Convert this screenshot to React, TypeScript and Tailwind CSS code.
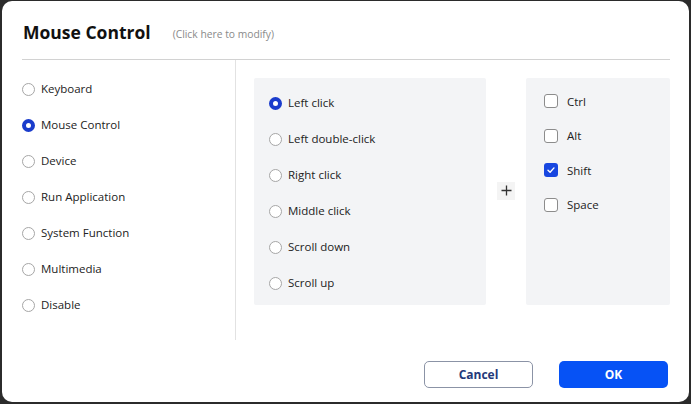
import React from 'react'

const FONT = { fontFamily: '"Open Sans", "Noto Sans", sans-serif' }

const CATEGORIES = ['Keyboard', 'Mouse Control', 'Device', 'Run Application', 'System Function', 'Multimedia', 'Disable']
const ACTIONS = ['Left click', 'Left double-click', 'Right click', 'Middle click', 'Scroll down', 'Scroll up']
const KEYS = [
  { label: 'Ctrl', checked: false },
  { label: 'Alt', checked: false },
  { label: 'Shift', checked: true },
  { label: 'Space', checked: false },
]

function Radio({ checked }: { checked: boolean }) {
  return checked ? (
    <span className="box-border block h-[13px] w-[13px] shrink-0 rounded-full border-[4px] border-[#1a3ccc] bg-white" />
  ) : (
    <span className="box-border block h-[13px] w-[13px] shrink-0 rounded-full border-[1.5px] border-[#a6a6a6] bg-white" />
  )
}

function Checkbox({ checked }: { checked: boolean }) {
  if (checked) {
    return (
      <span className="flex h-[14px] w-[14px] shrink-0 items-center justify-center rounded-[3px] bg-[#1746e0]">
        <svg width="10" height="10" viewBox="0 0 10 10" fill="none">
          <path d="M2 5.2 L4.1 7.2 L8 2.9" stroke="white" strokeWidth="1.4" strokeLinecap="round" strokeLinejoin="round" />
        </svg>
      </span>
    )
  }
  return <span className="box-border block h-[14px] w-[14px] shrink-0 rounded-[3px] border-[1.5px] border-[#8c8c8c] bg-white" />
}

export default function App() {
  return (
    <div className="h-[404px] w-[691px] bg-[#2b2b2b] pt-px pr-[2px] pb-[2px] pl-[2px]" style={FONT}>
      <div className="flex h-full flex-col rounded-[10px] bg-white pr-[19px] pl-[20px] text-[#222]">
        <div className="flex h-[59px] items-start border-b border-[#d2d2d2] pt-[20px]">
          <h1 className="pl-px text-[17.5px] leading-[23px] font-bold text-[#111]">Mouse Control</h1>
          <span className="ml-[22px] pt-[2px] text-[10.3px] leading-[23px] text-[#8a8a8a]">(Click here to modify)</span>
        </div>

        <div className="flex h-[280px]">
          <div className="w-[214px] border-r border-[#e2e2e2] pt-[11px]">
            {CATEGORIES.map((c, i) => (
              <div key={c} className="flex h-[36px] items-center gap-[6px] text-[11.5px]">
                <Radio checked={i === 1} />
                <span>{c}</span>
              </div>
            ))}
          </div>

          <div className="flex items-start pt-[18px] pl-[18px]">
            <div className="h-[227px] w-[232px] rounded-[2px] bg-[#f3f4f6] pt-[7px] pl-[15px]">
              {ACTIONS.map((a, i) => (
                <div key={a} className="flex h-[36px] items-center gap-[6px] text-[11.5px]">
                  <Radio checked={i === 0} />
                  <span>{a}</span>
                </div>
              ))}
            </div>

            <div className="flex h-[227px] w-[40px] items-center justify-center">
              <span className="mt-[-2px] flex h-[18px] w-[18px] items-center justify-center bg-[#f4f4f4]">
                <svg width="11" height="11" viewBox="0 0 11 11">
                  <path d="M5.5 0.5 V10.5 M0.5 5.5 H10.5" stroke="#333" strokeWidth="1.3" />
                </svg>
              </span>
            </div>

            <div className="h-[227px] w-[144px] rounded-[2px] bg-[#f3f4f6] pt-[6px] pl-[18px]">
              {KEYS.map((k) => (
                <div key={k.label} className="flex h-[34.5px] items-center gap-[9px] text-[11.5px]">
                  <Checkbox checked={k.checked} />
                  <span>{k.label}</span>
                </div>
              ))}
            </div>
          </div>
        </div>

        <div className="flex justify-end gap-[26px] pt-[21px] pr-[2px]">
          <button
            type="button"
            className="h-[27px] w-[109px] rounded-[5px] border border-[#8b93a6] bg-white text-[12px] font-bold text-[#23397a]"
          >
            Cancel
          </button>
          <button type="button" className="h-[27px] w-[109px] rounded-[5px] bg-[#0652f5] text-[12px] font-bold text-white">
            OK
          </button>
        </div>
      </div>
    </div>
  )
}
